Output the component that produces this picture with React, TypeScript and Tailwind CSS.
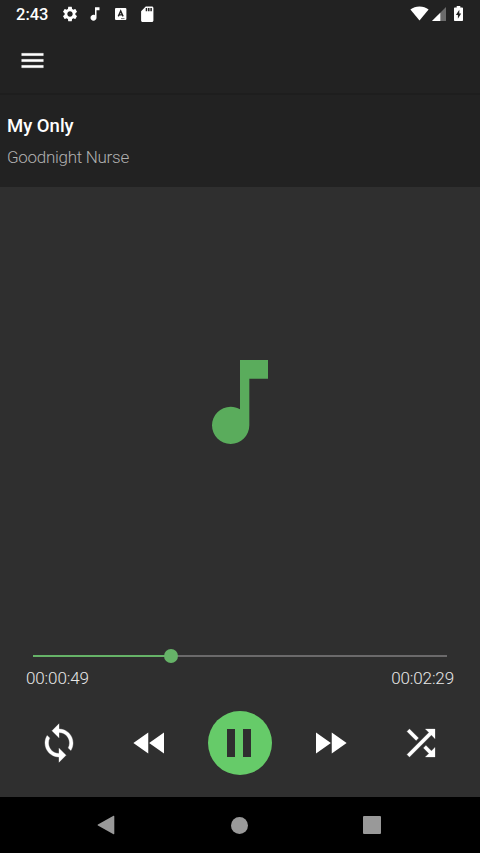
import { clsx } from "clsx";

const paths = {
  settings:
    "M19.14 12.94c.04-.3.06-.61.06-.94 0-.32-.02-.64-.07-.94l2.03-1.58c.18-.14.23-.41.12-.61l-1.92-3.32c-.12-.22-.37-.29-.59-.22l-2.39.96c-.5-.38-1.03-.7-1.62-.94l-.36-2.54c-.04-.24-.24-.41-.48-.41h-3.84c-.24 0-.43.17-.47.41l-.36 2.54c-.59.24-1.13.57-1.62.94l-2.39-.96c-.22-.08-.47 0-.59.22L2.74 8.87c-.12.21-.08.47.12.61l2.03 1.58c-.05.3-.09.63-.09.94s.02.64.07.94l-2.03 1.58c-.18.14-.23.41-.12.61l1.92 3.32c.12.22.37.29.59.22l2.39-.96c.5.38 1.03.7 1.62.94l.36 2.54c.05.24.24.41.48.41h3.84c.24 0 .44-.17.47-.41l.36-2.54c.59-.24 1.13-.56 1.62-.94l2.39.96c.22.08.47 0 .59-.22l1.92-3.32c.12-.22.07-.47-.12-.61l-2.01-1.58zM12 15.6c-1.98 0-3.6-1.62-3.6-3.6s1.62-3.6 3.6-3.6 3.6 1.62 3.6 3.6-1.62 3.6-3.6 3.6z",
  note: "M12 3v10.55c-.59-.34-1.27-.55-2-.55-2.21 0-4 1.79-4 4s1.79 4 4 4 4-1.79 4-4V7h4V3h-6z",
  sdCard:
    "M18 2h-8L4.02 8 4 20c0 1.1.9 2 2 2h12c1.1 0 2-.9 2-2V4c0-1.1-.9-2-2-2zm-6 6h-2V4h2v4zm3 0h-2V4h2v4zm3 0h-2V4h2v4z",
  menu: "M3 18h18v-2H3v2zm0-5h18v-2H3v2zm0-7v2h18V6H3z",
  loop: "M12 4V1L8 5l4 4V6c3.31 0 6 2.69 6 6 0 1.01-.25 1.97-.7 2.8l1.46 1.46C19.54 15.03 20 13.57 20 12c0-4.42-3.58-8-8-8zm0 14c-3.31 0-6-2.69-6-6 0-1.01.25-1.97.7-2.8L5.24 7.74C4.46 8.97 4 10.43 4 12c0 4.42 3.58 8 8 8v3l4-4-4-4v3z",
  rewind: "M11 18V6l-8.5 6 8.5 6zm.5-6l8.5 6V6l-8.5 6z",
  forward: "M4 18l8.5-6L4 6v12zm9-12v12l8.5-6L13 6z",
  shuffle:
    "M10.59 9.17L5.41 4 4 5.41l5.17 5.17 1.42-1.41zM14.5 4l2.04 2.04L4 18.59 5.41 20 17.96 7.46 20 9.5V4h-5.5zm.33 9.41l-1.41 1.41 3.13 3.13L14.5 20H20v-5.5l-2.04 2.04-3.13-3.13z",
};

function Icon({ name, className }: { name: keyof typeof paths; className?: string }) {
  return (
    <svg viewBox="0 0 24 24" fill="currentColor" className={clsx("shrink-0", className)}>
      <path d={paths[name]} />
    </svg>
  );
}

function StatusBar() {
  return (
    <div className="flex h-7 items-center justify-between px-4">
      <div className="flex items-center">
        <span className="w-[44.5px] pt-0.5 text-[16.5px] font-medium leading-7">2:43</span>
        <Icon name="settings" className="size-[18px]" />
        <Icon name="note" className="ml-[7.5px] size-[18px]" />
        <svg viewBox="0 0 12 12" className="mb-px ml-[11px] size-3">
          <rect width="11.4" height="12" rx="1" fill="currentColor" />
          <path d="M3.3 8.4 5.7 3l2.400 5.400M4.200 6.900h3" fill="none" stroke="#222222" strokeWidth="1.4" />
          <path d="M6 10.600H9.500" stroke="#222222" strokeWidth=".6" />
        </svg>
        <Icon name="sdCard" className="ml-[11px] size-[18.5px]" />
      </div>
      <div className="flex items-center">
        <svg viewBox="0 0 19 15" className="mb-px h-[15px] w-[19px]">
          <path d="M9.5 14.5.4 3.500C3 1.300 6 .4 9.500.4s6.500.9 9.100 3.100z" fill="currentColor" />
        </svg>
        <svg viewBox="0 0 14 14" className="ml-[3px] size-3.5">
          <path d="M14 0 0 14h14z" fill="#6b6b6b" />
          <path d="M8.300 5.700 0 14h8.300z" fill="currentColor" />
        </svg>
        <svg viewBox="0 0 9 15" className="mb-px ml-2 mr-px h-[15px] w-[9px]">
          <path d="M2.700 0h3.600v1.500H8.200a.8.8 0 0 1 .8.800v11.900a.8.8 0 0 1-.8.800H.8a.8.8 0 0 1-.8-.8V2.300a.8.8 0 0 1 .8-.8h1.900z" fill="currentColor" />
          <path d="M5.300 3.800 1.900 9h2v3.700L7.200 7.500h-1.900z" fill="#222222" />
        </svg>
      </div>
    </div>
  );
}

function Progress({ position, duration }: { position: number; duration: number }) {
  const percent = (position / duration) * 100;
  return (
    <div className="relative mx-[33px] flex h-3.5 items-center">
      <div className="h-0.5 w-full bg-[#6b6a6b]">
        <div className="h-full bg-[#66b368]" style={{ width: `${percent}%` }} />
      </div>
      <div
        className="absolute size-3.5 -translate-x-1/2 rounded-full bg-[#66b368]"
        style={{ left: `${percent}%` }}
      />
    </div>
  );
}

export default function App() {
  return (
    <div className="flex h-[853px] w-[480px] flex-col overflow-hidden bg-[#2f2f2f] font-['Roboto',sans-serif] text-white">
      <header className="h-[93px] bg-[#222222]">
        <StatusBar />
        <button className="ml-[18px] mt-[18px] block">
          <Icon name="menu" className="size-[29px] stroke-white stroke-[0.2]" />
        </button>
      </header>

      <div className="h-[94px] border-t-2 border-[#1e1e1e] bg-[#222222] pl-[7px] pt-[18px]">
        <h1 className="text-[18.5px] font-medium leading-[26px]">My Only</h1>
        <p className="mt-1.5 text-[17px] font-light leading-6 tracking-[-0.29px] text-[#b0b0b0]">
          Goodnight Nurse
        </p>
      </div>

      <main className="flex flex-1 flex-col">
        <div className="flex h-[462px] items-center justify-center pb-8">
          <Icon name="note" className="size-28 text-[#5aac5c]" />
        </div>
        <Progress position={49.8} duration={149} />
        <div className="mt-[3px] flex justify-between px-[26px] text-[17px] font-light leading-6 tracking-[-0.12px] text-[#e8e8e8]">
          <span>00:00:49</span>
          <span>00:02:29</span>
        </div>
        <div className="mt-[21px] grid h-16 grid-cols-5 place-items-center px-3.5">
          <Icon name="loop" className="size-[42px] stroke-white stroke-[0.2]" />
          <Icon name="rewind" className="size-[42px]" />
          <button className="mb-px flex size-[63.5px] items-center justify-center gap-2 rounded-full bg-[#66cb69] pr-px">
            <span className="h-7 w-2 bg-[#2f2f2f]" />
            <span className="h-7 w-2 bg-[#2f2f2f]" />
          </button>
          <Icon name="forward" className="size-[42px]" />
          <Icon name="shuffle" className="size-[42px] stroke-white stroke-[0.15]" />
        </div>
      </main>

      <nav className="flex h-14 items-center justify-between bg-black pl-[97px] pr-[99px] text-[#999999]">
        <svg viewBox="0 0 18 20" className="h-5 w-[18px]">
          <path d="M16.500.8.900 9.500a.6.600 0 0 0 0 1l15.600 8.700q.8.300.8-.6V1.400q0-.9-.8-.6z" fill="currentColor" />
        </svg>
        <div className="size-[17px] rounded-full bg-[#999999]" />
        <div className="size-[18px] rounded-[1px] bg-[#999999]" />
      </nav>
    </div>
  );
}
